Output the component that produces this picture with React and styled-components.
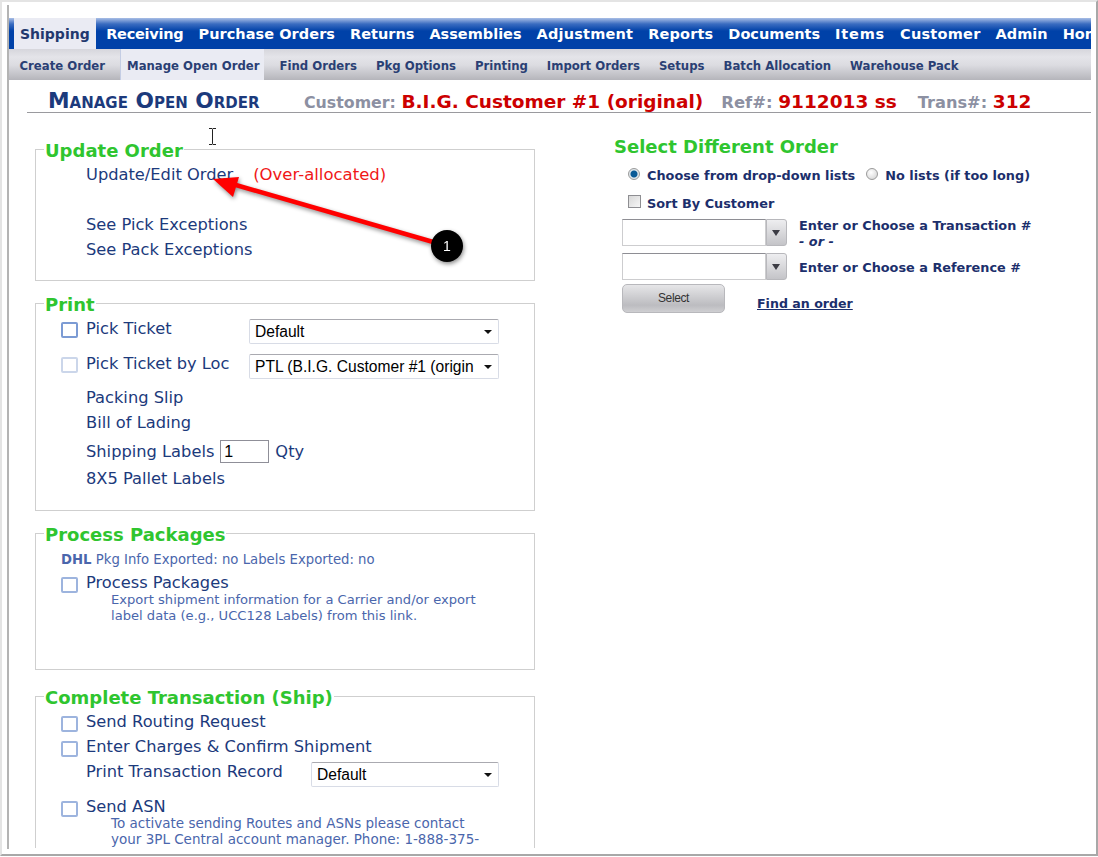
import React from 'react'
import styled, { createGlobalStyle } from 'styled-components'

const GlobalStyle = createGlobalStyle`
  html, body {
    margin: 0;
    padding: 0;
    background: #fff;
    font-family: "DejaVu Sans", Verdana, sans-serif;
  }
`

// ls: small tracking per tab, keeps the tabs on the same x as the original font
const mainTabs = [
  { label: 'Shipping', ls: 0 },
  { label: 'Receiving', ls: -0.25 },
  { label: 'Purchase Orders', ls: 0.05 },
  { label: 'Returns', ls: 0 },
  { label: 'Assemblies', ls: 0 },
  { label: 'Adjustment', ls: 0.2 },
  { label: 'Reports', ls: 0.15 },
  { label: 'Documents', ls: 0 },
  { label: 'Items', ls: 0.8 },
  { label: 'Customer', ls: 0.25 },
  { label: 'Admin', ls: 0 },
  { label: 'Home', ls: 0 },
]
const subTabs = ['Create Order', 'Manage Open Order', 'Find Orders', 'Pkg Options', 'Printing', 'Import Orders', 'Setups', 'Batch Allocation', 'Warehouse Pack']

const App = () => (
  <Page>
    <GlobalStyle />
    <Viewport>
      <MainNav>
        {mainTabs.map((t) => (
          <MainTab key={t.label} $active={t.label === 'Shipping'} $ls={t.ls}>{t.label}</MainTab>
        ))}
      </MainNav>
      <SubNav>
        {subTabs.map((t) => (
          <SubTab key={t} $active={t === 'Manage Open Order'}>{t}</SubTab>
        ))}
      </SubNav>

      <TitleBar>
        <Title>Manage Open Order</Title>
        <Meta $size={15.8} $mr={18}>Customer: <b>B.I.G. Customer #1 (original)</b></Meta>
        <Meta $size={16.4} $mr={21}>Ref#: <b>9112013 ss</b></Meta>
        <Meta $size={16.2} $mr={0}>Trans#: <b>312</b></Meta>
      </TitleBar>

      <Columns>
        <LeftColumn>
          <Box $h={142}>
            <Legend>Update Order</Legend>
            <Row $h={24}>
              <Link>Update/Edit Order</Link>
              <Warning>(Over-allocated)</Warning>
            </Row>
            <Row $h={25} />
            <Row $h={25}><Link>See Pick Exceptions</Link></Row>
            <Row $h={25}><Link>See Pack Exceptions</Link></Row>
          </Box>

          <Box $h={218}>
            <Legend>Print</Legend>
            <TopRow $h={36} $pt={1}>
              <Check $focus />
              <Link $w={163} $mt={1}>Pick Ticket</Link>
              <Dropdown $w={250}><span>Default</span></Dropdown>
            </TopRow>
            <TopRow $h={32}>
              <Check $faint />
              <Link $w={163} $mt={1}>Pick Ticket by Loc</Link>
              <Dropdown $w={250}><span>PTL (B.I.G. Customer #1 (origin</span></Dropdown>
            </TopRow>
            <Row $h={25}><Link>Packing Slip</Link></Row>
            <Row $h={25}><Link>Bill of Lading</Link></Row>
            <Row $h={33}>
              <Link>Shipping Labels</Link>
              <QtyInput>1</QtyInput>
              <Link>Qty</Link>
            </Row>
            <Row $h={21}><Link>8X5 Pallet Labels</Link></Row>
          </Box>

          <Box $h={147}>
            <Legend>Process Packages</Legend>
            <Note><b>DHL</b> Pkg Info Exported: no Labels Exported: no</Note>
            <Row $h={22} $pt={3} $check>
              <Check />
              <Link>Process Packages</Link>
            </Row>
            <Help $size={13.1}>
              Export shipment information for a Carrier and/or export<br />
              label data (e.g., UCC128 Labels) from this link.
            </Help>
          </Box>

          <Box $h={220} $mt={4}>
            <Legend>Complete Transaction (Ship)</Legend>
            <Row $h={24} $check>
              <Check />
              <Link>Send Routing Request</Link>
            </Row>
            <Row $h={25} $check>
              <Check />
              <Link>Enter Charges &amp; Confirm Shipment</Link>
            </Row>
            <TopRow $h={29} $indent>
              <Link $w={225} $mt={3}>Print Transaction Record</Link>
              <Dropdown $w={188} $mt={3}><span>Default</span></Dropdown>
            </TopRow>
            <Row $h={29} $check $end>
              <Check />
              <Link>Send ASN</Link>
            </Row>
            <Help $size={13.5} $mt={-2}>
              To activate sending Routes and ASNs please contact<br />
              your 3PL Central account manager. Phone: 1-888-375-
            </Help>
          </Box>
        </LeftColumn>

        <RightColumn>
          <SideTitle>Select Different Order</SideTitle>
          <OptionRow>
            <Radio $on />
            <OptionText>Choose from drop-down lists</OptionText>
            <Radio />
            <OptionText>No lists (if too long)</OptionText>
          </OptionRow>
          <SortRow>
            <SmallCheck />
            <OptionText>Sort By Customer</OptionText>
          </SortRow>
          <ComboRow>
            <ComboInput />
            <ComboButton />
            <ComboLabel $pt={1}>
              Enter or Choose a Transaction #
              <Or>- or -</Or>
            </ComboLabel>
          </ComboRow>
          <ComboRow $gap>
            <ComboInput />
            <ComboButton />
            <ComboLabel $pt={2}>Enter or Choose a Reference #</ComboLabel>
          </ComboRow>
          <ButtonRow>
            <SelectButton>Select</SelectButton>
            <FindLink>Find an order</FindLink>
          </ButtonRow>
        </RightColumn>
      </Columns>

      <Annotation width="480" height="130" viewBox="0 0 480 130">
        <line x1="438" y1="90" x2="220" y2="27" stroke="#f00" strokeWidth="4.5" />
        <polygon points="204,23 230,21 224,41" fill="#f00" />
        <circle cx="438" cy="90" r="16" fill="#000" />
        <text x="438" y="95" textAnchor="middle" fontSize="14" fill="#fff" fontFamily="Liberation Sans, sans-serif">1</text>
      </Annotation>
      <TextCursor width="9" height="17" viewBox="0 0 9 17">
        <path d="M1 .5h3l.5 1 .5-1h3M4.5 1.5v14M1 16.5h3l.5-1 .5 1h3" fill="none" stroke="#222" />
      </TextCursor>
    </Viewport>
  </Page>
)

export default App

const Page = styled.div`
  box-sizing: border-box;
  position: relative;
  width: 1098px;
  height: 856px;
  padding: 16px 0 0 7px;
  overflow: hidden;
  background: #fff;
  border-top: 2px solid #e4e4e4;
  border-left: 2px solid #e4e4e4;
  border-right: 2px solid #a8a8a8;
  border-bottom: 2px solid #a8a8a8;

  &::before {
    content: '';
    position: absolute;
    left: 5px;
    top: 3px;
    height: 844px;
    width: 2px;
    background: #b4b4b4;
  }
`

const Viewport = styled.div`
  position: relative;
  width: 1082px;
  height: 830px;
  overflow: hidden;
  color: #1c3a7c;
`

const MainNav = styled.div`
  display: flex;
  height: 31px;
  padding-left: 5px;
  overflow: hidden;
  white-space: nowrap;
  background: linear-gradient(#a9bee6 0, #3a6cc0 6px, #0041a8 13px, #0041a8 100%);
`

const MainTab = styled.div`
  padding: 0 ${(p) => (p.$active ? '6px' : '7.5px')};
  margin-right: ${(p) => (p.$active ? '3px' : '0')};
  font-size: ${(p) => (p.$active ? '14px' : '14.5px')};
  font-weight: bold;
  letter-spacing: ${(p) => p.$ls}px;
  line-height: 33px;
  color: ${(p) => (p.$active ? '#22386e' : '#fff')};
  background: ${(p) => (p.$active ? '#eaebf3' : 'transparent')};
`

const SubNav = styled.div`
  display: flex;
  height: 31px;
  padding-left: 1px;
  white-space: nowrap;
  background: linear-gradient(#d6d6dc 0, #e4e4e9 8px, #dcdce1 16px, #b5b5bb 100%);
`

const SubTab = styled.div`
  padding: ${(p) => (p.$active ? '0 5px 0 6px' : '0 9.5px')};
  margin: 0 ${(p) => (p.$active ? '5.5px' : '0')};
  font-size: 11.7px;
  font-weight: bold;
  line-height: 34px;
  color: #2a3f74;
  background: ${(p) => (p.$active ? '#eaebf3' : 'transparent')};
  border-left: ${(p) => (p.$active ? '1px solid #c4cde4' : 'none')};
`

const TitleBar = styled.div`
  display: flex;
  align-items: baseline;
  height: 32px;
  margin-left: 18px;
  padding-left: 21px;
  line-height: 42px;
  white-space: nowrap;
  border-bottom: 1px solid #9a9a9e;
`

const Title = styled.div`
  width: 256px;
  font-size: 21.7px;
  font-weight: bold;
  font-variant: small-caps;
  color: #1c3a7c;
`

const Meta = styled.div`
  margin-right: ${(p) => p.$mr}px;
  font-size: ${(p) => p.$size}px;
  font-weight: bold;
  color: #8c90a2;

  b {
    font-size: 18.5px;
    color: #cc0000;
  }
`

const Columns = styled.div`
  display: flex;
  padding: 26px 0 0 26px;
`

const LeftColumn = styled.div`
  display: flex;
  flex-direction: column;
  gap: 12px;
  flex: none;
  width: 500px;
`

const Box = styled.fieldset`
  box-sizing: border-box;
  height: ${(p) => p.$h}px;
  margin: ${(p) => p.$mt || 0}px 0 0;
  padding: 4px 0 0 25px;
  min-width: 0;
  border: 1px solid #cfcfcf;
`

const Legend = styled.legend`
  height: 20px;
  margin-left: -17px;
  padding: 0 1px;
  font-size: 18px;
  font-weight: bold;
  line-height: 24px;
  color: #2fc52f;
`

const Row = styled.div`
  box-sizing: border-box;
  display: flex;
  align-items: ${(p) => (p.$end ? 'flex-end' : 'center')};
  height: ${(p) => p.$h}px;
  padding-top: ${(p) => p.$pt || 0}px;
  padding-left: ${(p) => (p.$check ? '0' : '25px')};
  white-space: nowrap;
`

const TopRow = styled(Row)`
  align-items: flex-start;
  padding-left: ${(p) => (p.$indent ? '25px' : '0')};
`

const Check = styled.span`
  box-sizing: border-box;
  flex: none;
  width: 17px;
  height: 16px;
  margin: 4px 8px 0 0;
  border: 2px solid ${(p) => (p.$faint ? '#cbd6ea' : p.$focus ? '#7c9bd4' : '#9db4de')};
  border-radius: 2px;
  background: #fff;
`

const Link = styled.span`
  flex: none;
  width: ${(p) => (p.$w ? `${p.$w}px` : 'auto')};
  margin-top: ${(p) => p.$mt || 0}px;
  font-size: 16.25px;
  line-height: 20px;
  color: #1c3a7c;
`

const Warning = styled.span`
  margin-left: 20px;
  font-size: 16.5px;
  line-height: 20px;
  color: #f01818;
`

const Dropdown = styled.div`
  box-sizing: border-box;
  position: relative;
  display: flex;
  align-items: center;
  flex: none;
  width: ${(p) => p.$w}px;
  height: 25px;
  margin-top: ${(p) => p.$mt || 1}px;
  padding-left: 5px;
  border: 1px solid #d8dce6;
  border-top-color: #aaaab0;
  border-radius: 2px;
  font-family: "Liberation Sans", Arial, sans-serif;
  font-size: 15.6px;
  color: #000;
  background: #fff;

  span {
    width: calc(100% - 22px);
    overflow: hidden;
    white-space: nowrap;
  }

  &::after {
    content: '';
    position: absolute;
    right: 6px;
    top: 10px;
    border: 4px solid transparent;
    border-top: 4px solid #111;
    border-bottom: 0;
  }
`

const QtyInput = styled.div`
  box-sizing: border-box;
  width: 49px;
  height: 23px;
  margin: 0 6px;
  padding-left: 3px;
  border: 1px solid #8f8f98;
  font-family: "Liberation Sans", Arial, sans-serif;
  font-size: 16px;
  line-height: 22px;
  color: #000;
`

const Note = styled.div`
  margin-top: 3px;
  font-size: 13.25px;
  line-height: 20px;
  color: #4a66ac;
`

const Help = styled.div`
  margin-top: ${(p) => p.$mt || 0}px;
  padding-left: 50px;
  font-size: ${(p) => p.$size}px;
  line-height: 16px;
  color: #4a66ac;
  white-space: nowrap;
`

const RightColumn = styled.div`
  margin-left: 79px;
`

const SideTitle = styled.div`
  margin-top: -3px;
  font-size: 18px;
  font-weight: bold;
  line-height: 22px;
  color: #2fc52f;
`

const OptionRow = styled.div`
  display: flex;
  align-items: center;
  height: 20px;
  margin-top: 7px;
  padding-left: 14px;
`

const Radio = styled.span`
  box-sizing: border-box;
  flex: none;
  width: 12px;
  height: 12px;
  margin: -3px 7px 0 0;
  border: 1px solid #9a9a9a;
  border-radius: 50%;
  background: ${(p) =>
    p.$on
      ? 'radial-gradient(circle, #0a5a96 0, #0a5a96 3px, #dfe6ea 4px)'
      : 'radial-gradient(circle at 40% 35%, #fff, #cfcfcf)'};
`

const OptionText = styled.span`
  margin-right: 11px;
  font-size: 12.85px;
  font-weight: bold;
  color: #1c2f6c;
  white-space: nowrap;
`

const SortRow = styled(OptionRow)`
  margin-top: 8px;
`

const SmallCheck = styled.span`
  box-sizing: border-box;
  flex: none;
  width: 13px;
  height: 13px;
  margin: -3px 6px 0 0;
  border: 1px solid #8e8e92;
  background: linear-gradient(135deg, #d8d8d8, #f6f6f6);
`

const ComboRow = styled.div`
  display: flex;
  height: 27px;
  margin-top: ${(p) => (p.$gap ? '7px' : '6px')};
  padding-left: 8px;
`

const ComboInput = styled.div`
  box-sizing: border-box;
  width: 144px;
  height: 27px;
  border: 1px solid #cdcdcf;
  border-top-color: #8e8e94;
  background: #fff;
`

const ComboButton = styled.div`
  box-sizing: border-box;
  position: relative;
  width: 21px;
  height: 27px;
  border: 1px solid #b8b8bc;
  border-radius: 0 3px 3px 0;
  background: linear-gradient(#eeeef0, #c4c4c8);

  &::after {
    content: '';
    position: absolute;
    left: 5px;
    top: 10px;
    border: 4.5px solid transparent;
    border-top: 6px solid #3c3c44;
    border-bottom: 0;
  }
`

const ComboLabel = styled.div`
  margin-left: 12px;
  padding-top: ${(p) => p.$pt}px;
  font-size: 12.85px;
  font-weight: bold;
  line-height: 15px;
  color: #1c2f6c;
  white-space: nowrap;
  align-self: center;
`

const Or = styled.div`
  margin-top: 1px;
  font-style: italic;
`

const ButtonRow = styled.div`
  display: flex;
  align-items: center;
  margin-top: 4px;
  padding-left: 8px;
`

const SelectButton = styled.div`
  box-sizing: border-box;
  width: 103px;
  height: 29px;
  border: 1px solid #b8b8bc;
  border-radius: 5px;
  font-family: "Liberation Sans", Arial, sans-serif;
  font-size: 12px;
  line-height: 27px;
  text-align: center;
  color: #333;
  letter-spacing: -0.4px;
  background: linear-gradient(#e6e6e8, #bcbcc0 75%, #cfcfd2);
`

const FindLink = styled.span`
  margin: 10px 0 0 32px;
  font-size: 12.6px;
  font-weight: bold;
  color: #1c2f6c;
  text-decoration: underline;
`

const Annotation = styled.svg`
  position: absolute;
  left: 0;
  top: 138px;
  filter: drop-shadow(1px 2px 2px rgba(0, 0, 0, 0.45));
`

const TextCursor = styled.svg`
  position: absolute;
  left: 199px;
  top: 110px;
`
